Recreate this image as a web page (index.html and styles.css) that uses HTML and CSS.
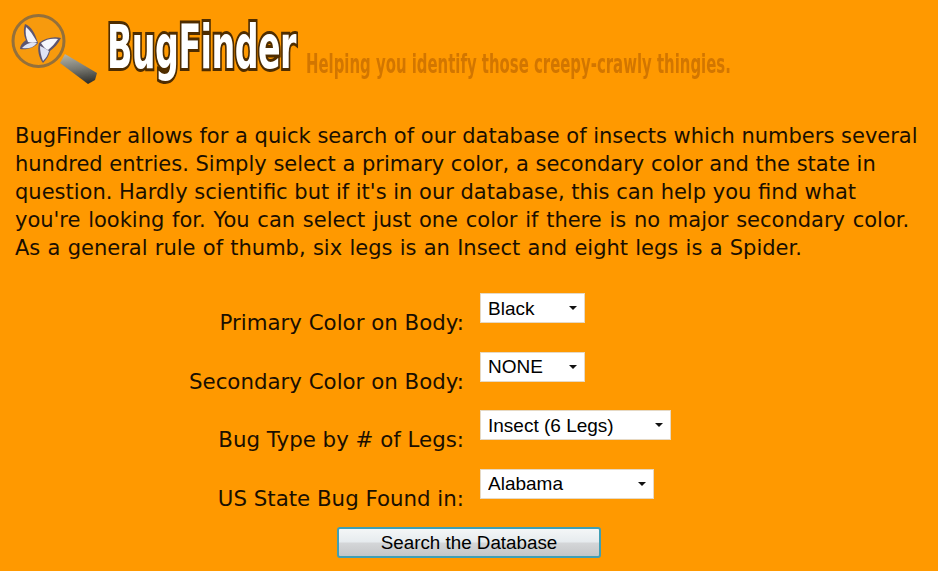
FILE: index.html
```html
<!DOCTYPE html>
<html lang="en">
  <head>
    <meta charset="UTF-8" />
    <meta name="viewport" content="width=device-width, initial-scale=1.0" />
    <title>BugFinder</title>
    <link rel="stylesheet" href="styles.css">
  </head>
  <body>
    <div class="header">
      <svg class="logo" width="100" height="90" viewBox="0 0 100 90">
        <defs>
          <linearGradient id="handle" x1="0.45" y1="0" x2="0.6" y2="1">
            <stop offset="0" stop-color="#b0b0a4" />
            <stop offset="0.5" stop-color="#77776f" />
            <stop offset="1" stop-color="#2e2e2a" />
          </linearGradient>
          <filter id="soft"><feGaussianBlur stdDeviation="0.6" /></filter>
        </defs>
        <g filter="url(#soft)">
          <!-- handle -->
          <path d="M65 54 L97 73 L95 80 L88 84 L60 63Z" fill="url(#handle)" />
          <!-- lens -->
          <circle cx="38.5" cy="41" r="25.5" fill="#f79a0c" stroke="#94703a" stroke-width="3" />
          <!-- butterfly: dark wing shapes, pale patches on top -->
          <path d="M38 43 C35 33 31 26 25 24 C23 30 24 36 26 40 C22 43 20 46 20 49 C27 50 34 48 38 43Z" fill="#5d5570" />
          <path d="M39 43 C45 38 54 36 61 38 C58 44 54 48 50 51 C49 56 46 60 43 63 C39 58 37 50 39 43Z" fill="#5d5570" />
          <path d="M37 42 C33 35 30 30 26 27 C25 33 26 37 28 42 C31 43 34 43 37 42Z" fill="#f2f3fb" />
          <path d="M37 43 C31 42 26 43 22 48 C28 49 33 48 37 43Z" fill="#dfe3f5" />
          <path d="M41 43 C46 39 52 38 58 39 C55 43 52 47 48 50 C45 49 43 46 41 43Z" fill="#f6f7fd" />
          <path d="M40 46 C43 47 46 49 49 51 C48 55 46 58 43 61 C41 56 40 51 40 46Z" fill="#dfe3f5" />
        </g>
      </svg>
      <div class="brand">BugFinder</div>
      <div class="tagline">Helping you identify those creepy-crawly thingies.</div>
    </div>

    <p class="intro">
      BugFinder allows for a quick search of our database of insects which numbers several<br />
      hundred entries. Simply select a primary color, a secondary color and the state in<br />
      question. Hardly scientific but if it's in our database, this can help you find what<br />
      <span class="spaced-wide">you're looking for. You can select just one color if there is no major secondary color.</span><br />
      <span class="spaced-some">As a general rule of thumb, six legs is an Insect and eight legs is a Spider.</span>
    </p>

    <form class="search-form">
      <div class="form-row">
        <label for="primary">Primary Color on Body:</label>
        <div class="select-wrap w-small">
          <select id="primary"><option>Black</option></select>
        </div>
      </div>
      <div class="form-row">
        <label for="secondary">Secondary Color on Body:</label>
        <div class="select-wrap w-small">
          <select id="secondary"><option>NONE</option></select>
        </div>
      </div>
      <div class="form-row">
        <label for="legs">Bug Type by # of Legs:</label>
        <div class="select-wrap w-large">
          <select id="legs"><option>Insect (6 Legs)</option></select>
        </div>
      </div>
      <div class="form-row">
        <label for="state">US State Bug Found in:</label>
        <div class="select-wrap w-medium">
          <select id="state"><option>Alabama</option></select>
        </div>
      </div>
      <div class="form-actions">
        <button type="button">Search the Database</button>
      </div>
    </form>
  </body>
</html>
```

FILE: styles.css
```css
* {
  margin: 0;
  padding: 0;
  box-sizing: border-box;
}

html,
body {
  height: 571px;
  overflow: hidden;
}

body {
  background-color: #ff9900;
  color: #1a0f00;
  font-family: "DejaVu Sans", Verdana, sans-serif;
}

.header {
  display: flex;
  align-items: flex-start;
  height: 122px;
}

.logo {
  flex-shrink: 0;
}

.brand {
  flex-shrink: 0;
  width: 200px;
  margin: 10px 0 0 7px;
  color: #fff;
  font-family: "DejaVu Sans", sans-serif;
  font-size: 60px;
  font-weight: bold;
  line-height: 74px;
  letter-spacing: -1px;
  white-space: nowrap;
  -webkit-text-stroke: 6px #4f2d00;
  paint-order: stroke fill;
  transform: scaleX(0.556);
  transform-origin: left top;
}

.tagline {
  flex-shrink: 0;
  margin: 47px 0 0 -1px;
  color: #d27600;
  font-family: "DejaVu Sans", sans-serif;
  font-size: 27px;
  font-weight: bold;
  line-height: 34px;
  white-space: nowrap;
  transform: scaleX(0.552);
  transform-origin: left top;
}

.intro {
  padding-left: 15px;
  font-size: 21px;
  line-height: 28px;
  white-space: nowrap;
}

.spaced-wide {
  word-spacing: 1.05px;
}

.spaced-some {
  word-spacing: 0.6px;
}

.search-form {
  margin-top: 31px;
}

.form-row {
  display: flex;
  height: 58.67px;
}

.form-row label {
  width: 464px;
  margin-right: 16px;
  padding-top: 16px;
  font-size: 21.33px;
  line-height: 28px;
  text-align: right;
}

.select-wrap {
  position: relative;
  height: 30px;
}

.w-small {
  width: 105px;
}

.w-medium {
  width: 174px;
}

.w-large {
  width: 191px;
}

/* little arrow on top of the select */
.select-wrap::after {
  content: "";
  position: absolute;
  top: 13px;
  right: 8px;
  border-left: 4px solid transparent;
  border-right: 4px solid transparent;
  border-top: 4px solid #111;
  pointer-events: none;
}

select {
  display: block;
  width: 100%;
  height: 100%;
  padding: 0 0 0 7px;
  appearance: none;
  background: #fff;
  border: 1px solid #e6d9c4;
  border-radius: 0;
  color: #000;
  font-family: "Liberation Sans", Arial, sans-serif;
  font-size: 19px;
}

.form-actions {
  margin-top: -1px;
  padding-left: 337px;
}

button {
  display: block;
  width: 264px;
  height: 31px;
  padding-top: 1px;
  background: linear-gradient(#f4f6f7 0%, #e6ebee 48%, #d4d6d8 52%, #c4c6c8 100%);
  border: 2px solid #3f9fb5;
  border-radius: 3px;
  color: #000;
  font-family: "Liberation Sans", Arial, sans-serif;
  font-size: 18.8px;
}
```
